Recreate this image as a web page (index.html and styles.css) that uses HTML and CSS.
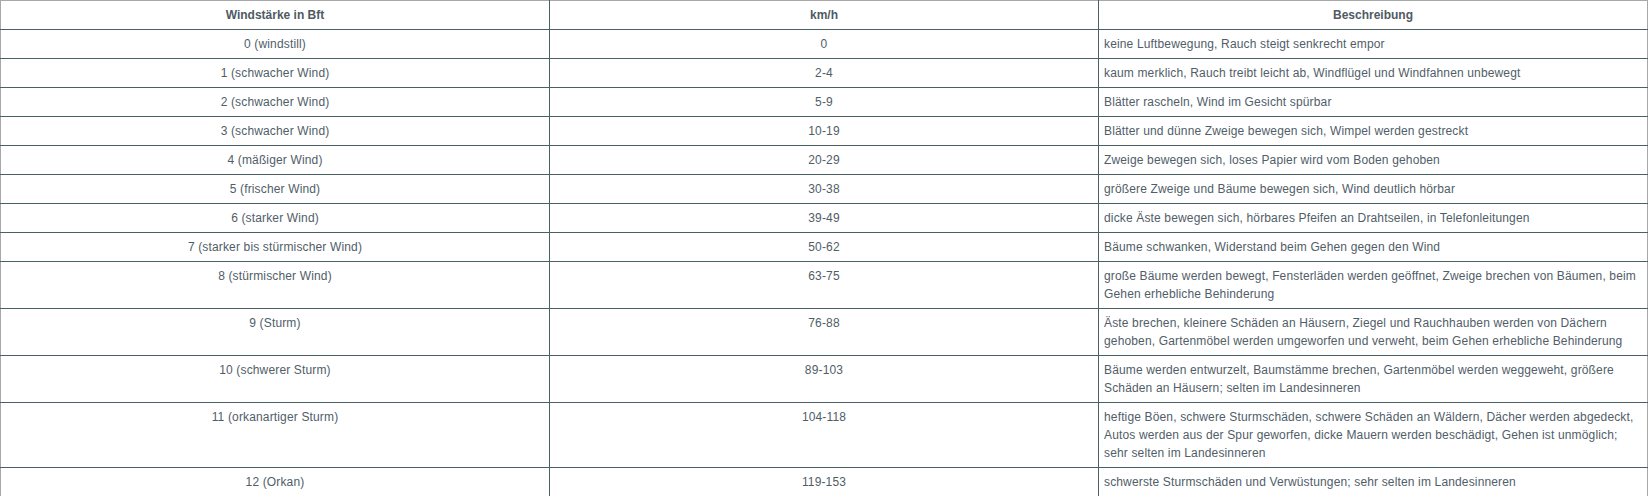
FILE: index.html
```html
<!DOCTYPE html>
<html lang="de">
<head>
<meta charset="utf-8">
<title>Windstärke</title>
<link rel="stylesheet" href="styles.css">
</head>
<body>
<table class="wind-table">
  <thead>
    <tr>
      <th>Windstärke in Bft</th>
      <th>km/h</th>
      <th>Beschreibung</th>
    </tr>
  </thead>
  <tbody>
    <tr><td>0 (windstill)</td><td>0</td><td>keine Luftbewegung, Rauch steigt senkrecht empor</td></tr>
    <tr><td>1 (schwacher Wind)</td><td>2-4</td><td>kaum merklich, Rauch treibt leicht ab, Windflügel und Windfahnen unbewegt</td></tr>
    <tr><td>2 (schwacher Wind)</td><td>5-9</td><td>Blätter rascheln, Wind im Gesicht spürbar</td></tr>
    <tr><td>3 (schwacher Wind)</td><td>10-19</td><td>Blätter und dünne Zweige bewegen sich, Wimpel werden gestreckt</td></tr>
    <tr><td>4 (mäßiger Wind)</td><td>20-29</td><td>Zweige bewegen sich, loses Papier wird vom Boden gehoben</td></tr>
    <tr><td>5 (frischer Wind)</td><td>30-38</td><td>größere Zweige und Bäume bewegen sich, Wind deutlich hörbar</td></tr>
    <tr><td>6 (starker Wind)</td><td>39-49</td><td>dicke Äste bewegen sich, hörbares Pfeifen an Drahtseilen, in Telefonleitungen</td></tr>
    <tr><td>7 (starker bis stürmischer Wind)</td><td>50-62</td><td>Bäume schwanken, Widerstand beim Gehen gegen den Wind</td></tr>
    <tr><td>8 (stürmischer Wind)</td><td>63-75</td><td>große Bäume werden bewegt, Fensterläden werden geöffnet, Zweige brechen von Bäumen, beim Gehen erhebliche Behinderung</td></tr>
    <tr><td>9 (Sturm)</td><td>76-88</td><td>Äste brechen, kleinere Schäden an Häusern, Ziegel und Rauchhauben werden von Dächern gehoben, Gartenmöbel werden umgeworfen und verweht, beim Gehen erhebliche Behinderung</td></tr>
    <tr><td>10 (schwerer Sturm)</td><td>89-103</td><td>Bäume werden entwurzelt, Baumstämme brechen, Gartenmöbel werden weggeweht, größere Schäden an Häusern; selten im Landesinneren</td></tr>
    <tr><td>11 (orkanartiger Sturm)</td><td>104-118</td><td>heftige Böen, schwere Sturmschäden, schwere Schäden an Wäldern, Dächer werden abgedeckt, Autos werden aus der Spur geworfen, dicke Mauern werden beschädigt, Gehen ist unmöglich; sehr selten im Landesinneren</td></tr>
    <tr><td>12 (Orkan)</td><td>119-153</td><td>schwerste Sturmschäden und Verwüstungen; sehr selten im Landesinneren</td></tr>
  </tbody>
</table>
</body>
</html>
```
FILE: styles.css
```css
html, body {
  margin: 0;
  padding: 0;
  background: #ffffff;
}

body {
  font-family: "Liberation Sans", Arial, sans-serif;
  font-size: 12px;
  line-height: 18px;
  color: #515d68;
}

.wind-table {
  width: 1648px;
  max-width: 100%;
  border-collapse: collapse;
  table-layout: fixed;
}

.wind-table th,
.wind-table td {
  border: 1px solid #4b6065;
  padding: 5px;
  vertical-align: top;
  text-align: center;
  font-size: 12px;
  line-height: 18px;
  letter-spacing: 0.15px;
}

.wind-table th {
  font-weight: bold;
  color: #4f5a64;
  border-top-color: #a8a8a8;
  letter-spacing: 0;
}

.wind-table td:nth-child(3) {
  text-align: left;
}

.wind-table th:first-child,
.wind-table td:first-child {
  border-left-color: #a8a8a8;
}

.wind-table th:last-child,
.wind-table td:last-child {
  border-right-color: #a8a8a8;
}
```
